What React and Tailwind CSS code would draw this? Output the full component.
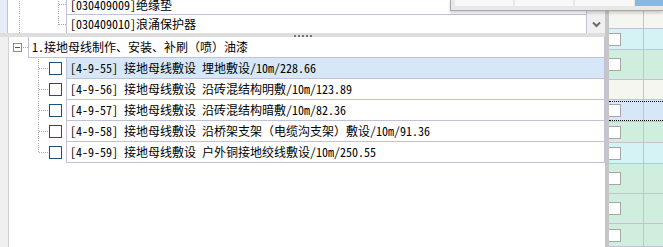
const LINE = "#c3c1d9";

function TreeLines({ w, h, lines }) {
  return (
    <svg className="absolute inset-0" width={w} height={h} shapeRendering="crispEdges">
      {lines.map((l, i) => (
        <line key={i} x1={l[0] + 0.5} y1={l[1] + 0.5} x2={l[2] + 0.5} y2={l[3] + 0.5} stroke="#a8a8a8" strokeWidth="1" strokeDasharray="1 1" />
      ))}
    </svg>
  );
}

const items = [
  "[4-9-55] 接地母线敷设 埋地敷设/10m/228.66",
  "[4-9-56] 接地母线敷设 沿砖混结构明敷/10m/123.89",
  "[4-9-57] 接地母线敷设 沿砖混结构暗敷/10m/82.36",
  "[4-9-58] 接地母线敷设 沿桥架支架（电缆沟支架）敷设/10m/91.36",
  "[4-9-59] 接地母线敷设 户外铜接地绞线敷设/10m/250.55",
];

const gridRows = [
  { h: "h-[29px]", bg: "bg-[#f6f6f0]", cb: false },
  { h: "h-[21px]", bg: "bg-[#d5f3f5]", cb: true },
  { h: "h-[30px]", bg: "bg-[#d0eede]", cb: true },
  { h: "h-[20px]", bg: "bg-[#f6f6f0]", cb: false },
  { h: "h-[22px]", bg: "bg-[#d6e8f8]", cb: true, focus: true },
  { h: "h-[21px]", bg: "bg-[#d0eede]", cb: true },
  { h: "h-[21px]", bg: "bg-[#d5f3f5]", cb: true },
  { h: "h-[30px]", bg: "bg-[#d0eede]", cb: true },
  { h: "h-[30px]", bg: "bg-[#d0eede]", cb: true },
  { h: "h-[23px]", bg: "bg-[#d0eede]", cb: true },
];

export default function App() {
  return (
    <div className="relative flex w-[663px] h-[247px] overflow-hidden bg-white text-[12px] text-black font-['Noto_Sans_Mono_CJK_SC','Noto_Sans_CJK_SC',monospace]">
      {/* Left column */}
      <div className="flex flex-col w-[605px] shrink-0">
        {/* Top dropdown list */}
        <div className="flex h-[33px]">
          <div className="w-[8px] shrink-0 bg-[#e6edf7] border-r border-[#b9c4d6]" />
          <div className="flex flex-1 min-w-0">
            <div className="flex flex-col flex-1 min-w-0">
              <div className="flex h-[15px]">
                <div className="relative w-[58px] shrink-0">
                  <TreeLines w={58} h={15} lines={[[11, 0, 11, 15], [50, 0, 50, 15], [50, 4, 58, 4]]} />
                </div>
                <div className="flex-1 flex items-end overflow-hidden border-l border-b border-[#c3c1d9] pl-[3px] whitespace-nowrap">
                  <span className="leading-[18px]">[030409009]绝缘垫</span>
                </div>
              </div>
              <div className="flex h-[18px]">
                <div className="relative w-[58px] shrink-0">
                  <TreeLines w={58} h={18} lines={[[11, 0, 11, 18], [50, 0, 50, 9], [50, 9, 58, 9]]} />
                </div>
                <div className="flex-1 flex items-center border-l border-[#c3c1d9] pl-[3px] whitespace-nowrap">
                  <span className="leading-[18px]">[030409010]浪涌保护器</span>
                </div>
              </div>
            </div>
            <div className="w-[19px] shrink-0 flex flex-col justify-end bg-[#f0f0f0] border-l border-[#c3c1d9]">
              <div className="h-[18px] flex items-center justify-center">
                <svg width="9" height="7" viewBox="0 0 9 7">
                  <path d="M1 1.5 L4.5 5 L8 1.5" fill="none" stroke="#6a6a6a" strokeWidth="2" />
                </svg>
              </div>
            </div>
          </div>
        </div>

        {/* Splitter */}
        <div className="h-[4px] bg-[#dedede] flex items-end justify-center gap-[2px]">
          {[0, 1, 2, 3, 4].map((i) => (
            <div key={i} className="w-[2px] h-[2px] bg-[#777777]" />
          ))}
        </div>

        {/* Main tree panel */}
        <div className="flex flex-1 min-h-0">
          <div className="w-[9px] shrink-0 bg-[#f0f0f0] border-r border-[#d2d2d2]" />
          <div className="flex flex-col flex-1 min-w-0 bg-white">
            {/* Header row */}
            <div className="flex h-[21px]">
              <div className="relative w-[19px] shrink-0 flex items-center">
                <TreeLines w={19} h={21} lines={[[13, 10, 19, 10]]} />
                <div className="relative ml-[4px] w-[9px] h-[9px] border border-[#8a8a8a] bg-white flex items-center justify-center">
                  <div className="w-[5px] h-[1px] bg-[#555555]" />
                </div>
              </div>
              <div className="flex-1 flex items-center border-l border-b border-r border-[#c3c1d9] pl-[3px] whitespace-nowrap">
                1.接地母线制作、安装、补刷（喷）油漆
              </div>
            </div>
            {/* Items */}
            {items.map((t, i) => (
              <div key={i} className="flex h-[21px]">
                <div className="relative w-[57px] shrink-0 flex items-center">
                  <TreeLines
                    w={57}
                    h={21}
                    lines={[[29, 0, 29, i === items.length - 1 ? 10 : 21], [29, 10, 38, 10]]}
                  />
                  <div className="relative ml-[40px] w-[13px] h-[13px] border border-[#1c4f80] bg-white" />
                </div>
                <div
                  className={
                    "flex-1 flex items-center border-l border-b border-r border-[#c3c1d9] pl-[3px] whitespace-nowrap " +
                    (i === 0 ? "bg-[#d6e8f8]" : "bg-white")
                  }
                >
                  {t}
                </div>
              </div>
            ))}
          </div>
        </div>
      </div>

      {/* Gray separator bar */}
      <div className="w-[4px] shrink-0 bg-[#c6c6c6]" />

      {/* Right grid */}
      <div className="flex flex-col w-[54px] shrink-0">
        {gridRows.map((r, i) => (
          <div key={i} className={"flex shrink-0 border-b border-[#c3c1d9] " + r.h + " " + r.bg}>
            <div className={"relative w-[35px] shrink-0 flex items-center border-r border-[#c3c1d9]"}>
              {r.cb && <div className="w-[12px] h-[13px] bg-white border border-l-0 border-[#a6a6a6]" />}
            </div>
            <div className="flex-1" />
            {r.focus && (
              <div className="absolute left-[609px] right-0 h-[20px] mt-[1px] border-y border-dotted border-black pointer-events-none" />
            )}
          </div>
        ))}
      </div>

      {/* Popup overlay at top right */}
      <div className="absolute left-[450px] top-0 w-[213px] h-[11px] bg-[#e8e8e8] border-l border-b border-[#a8a8a8] shadow-[0_2px_3px_rgba(0,0,0,0.18)] flex items-start pl-[4px] gap-[2px]">
        <div className="w-[58px] h-[6px] bg-[#f8f8f8]" />
        <div className="w-[58px] h-[6px] bg-[#f8f8f8]" />
        <div className="w-[59px] h-[6px] bg-[#f8f8f8]" />
        <div className="flex-1 h-[6px] bg-[#88b8e0] -ml-[1px]" />
      </div>
    </div>
  );
}
